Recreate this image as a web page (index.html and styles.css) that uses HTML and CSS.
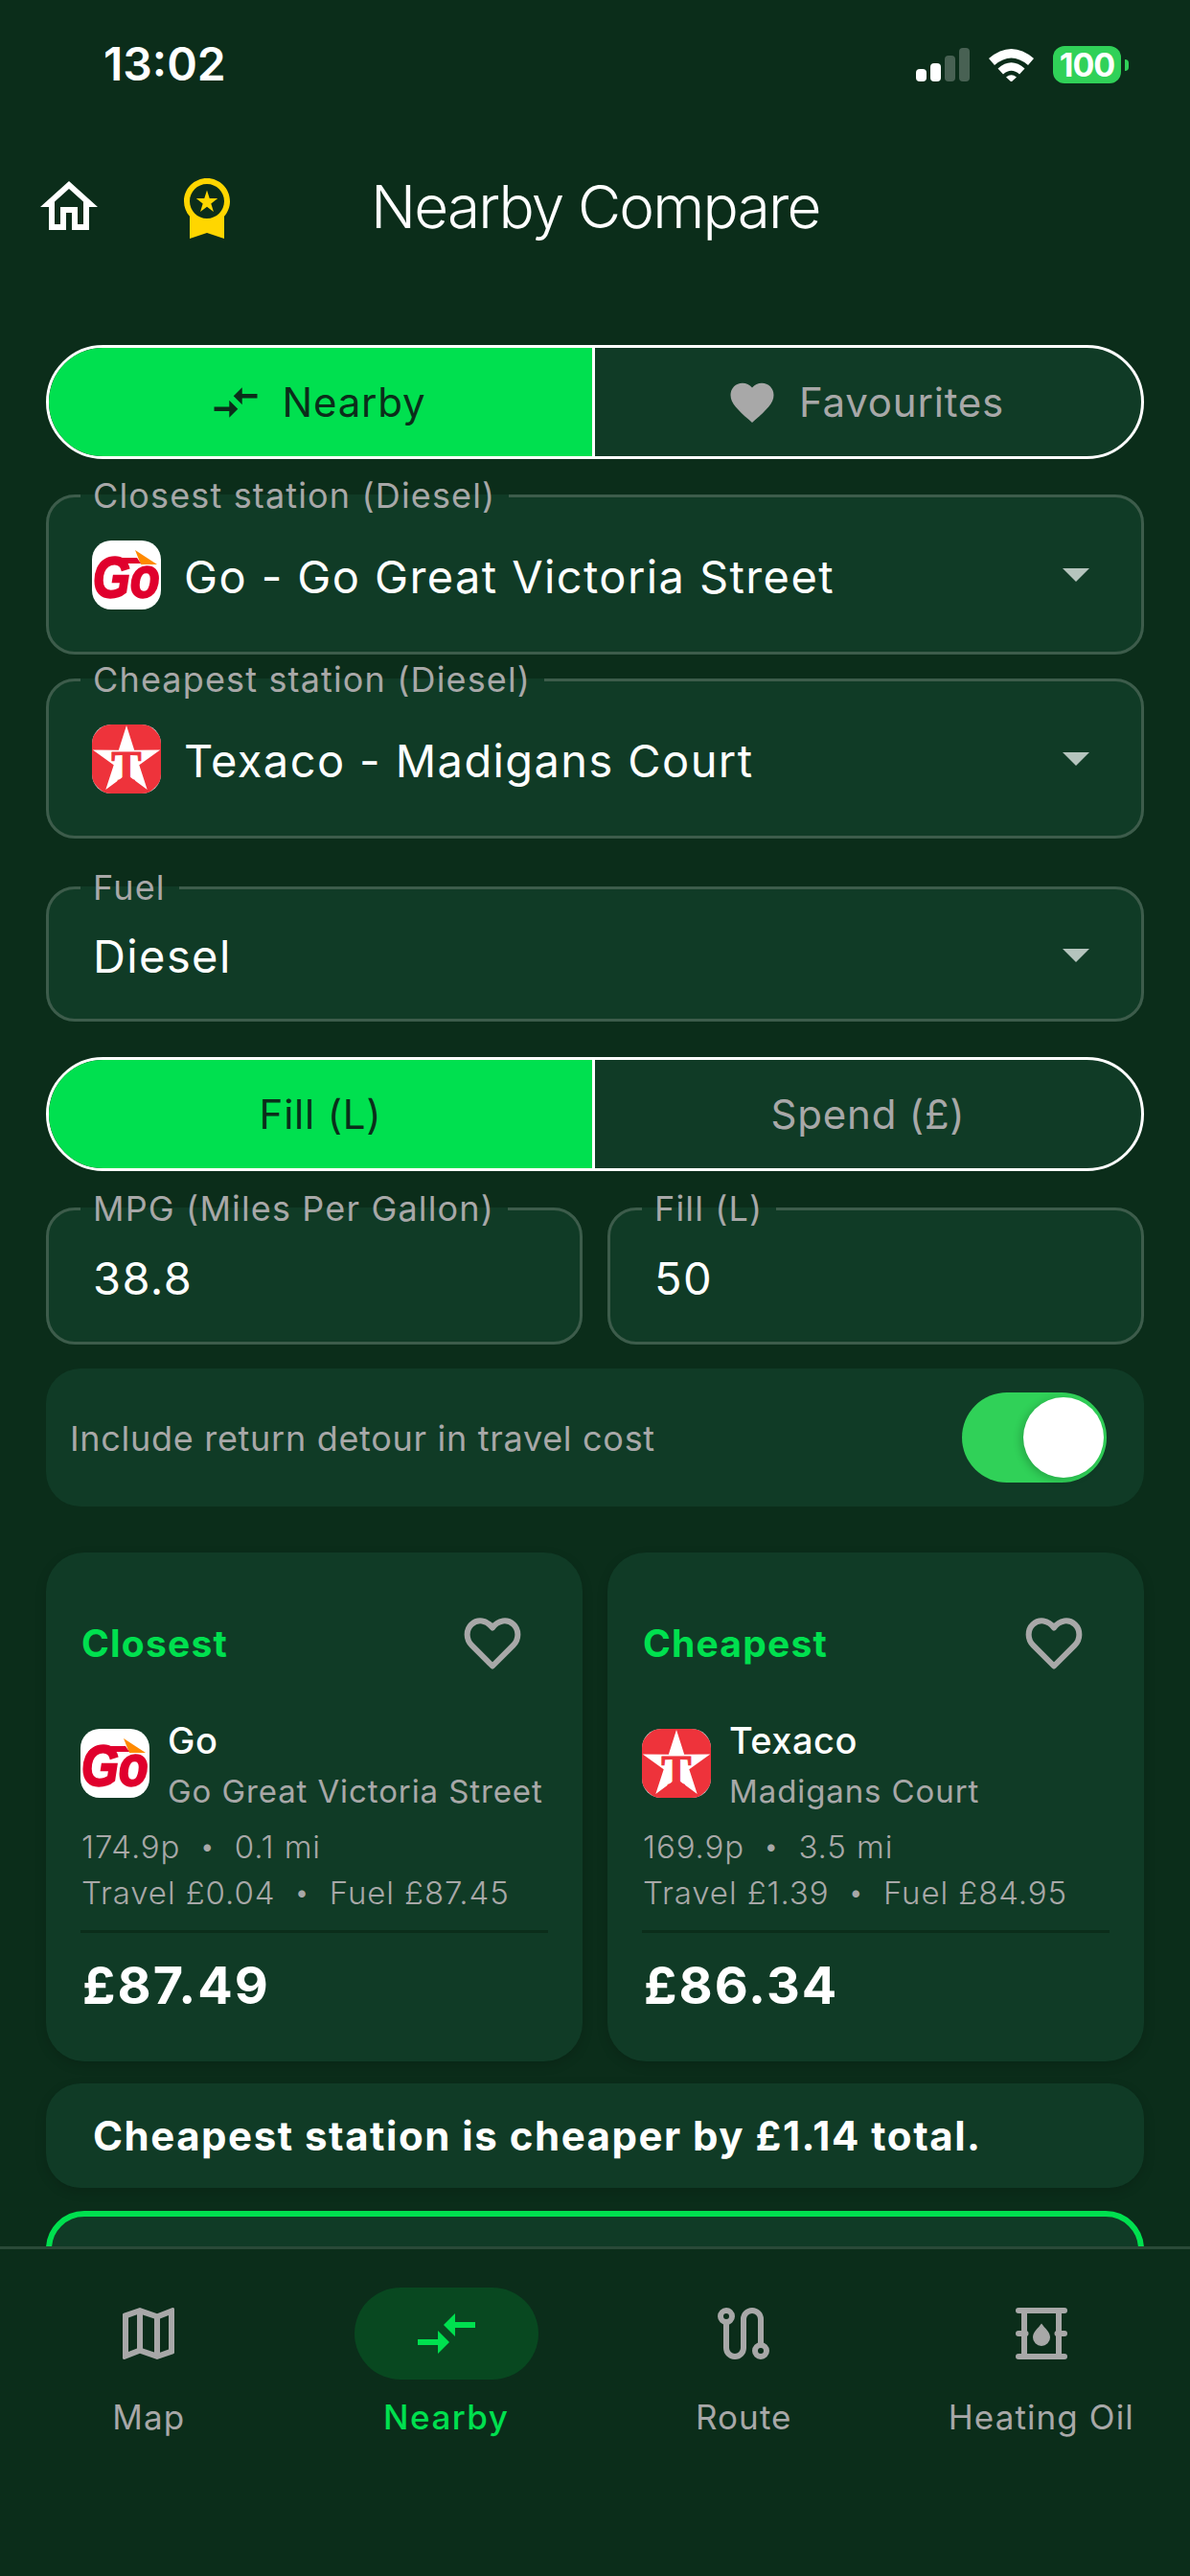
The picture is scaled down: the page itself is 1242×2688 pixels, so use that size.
FILE: index.html
```html
<!DOCTYPE html>
<html lang="en">
<head>
<meta charset="utf-8">
<title>Nearby Compare</title>
<link rel="stylesheet" href="styles.css">
</head>
<body>
<div class="app">
  <div class="status">
    <span class="time">13:02</span>
    <div class="status-icons">
      <div class="signal">
        <i class="bar b1"></i><i class="bar b2"></i><i class="bar b3 dim"></i><i class="bar b4 dim"></i>
      </div>
      <svg class="wifi" viewBox="0 0 47 35"><path d="M0 11Q23.500-9 47 11L41 18Q23.500 3 6 18Z"/><path d="M9.500 21.500Q23.500 9 37.500 21.500L32 27.500Q23.500 20 15 27.500Z"/><path d="M18 30.500Q23.500 26 29 30.500L23.500 35.500Z"/></svg>
      <div class="battery"><span class="batt-body">100</span><i class="batt-nub"></i></div>
    </div>
  </div>

  <header class="header">
    <svg class="ic72 white" viewBox="0 0 24 24"><path d="M12 5.690l5 4.500V18h-2v-6H9v6H7v-7.810l5-4.500M12 3L2 12h3v8h6v-6h2v6h6v-8h3L12 3z"/></svg>
    <svg class="ic72 gold" viewBox="0 0 24 24"><path d="M9.680 13.690 12 11.930l2.310 1.760-.88-2.850L15.750 9h-2.840L12 6.190 11.090 9H8.250l2.310 1.840-.88 2.850zM20 10c0-4.420-3.580-8-8-8s-8 3.580-8 8c0 2.030.76 3.870 2 5.280V23l6-2 6 2v-7.720c1.240-1.410 2-3.250 2-5.280zm-8-6c3.310 0 6 2.690 6 6s-2.690 6-6 6-6-2.690-6-6 2.690-6 6-6z"/></svg>
    <h1 class="title">Nearby Compare</h1>
  </header>

  <main class="scroll">
    <div class="segment">
      <div class="seg-item on with-icon">
        <svg class="ic54" viewBox="0 0 24 24"><path d="M9.010 14H2v2h7.010v3L13 15l-3.990-4v3zm5.980-1v-3H22V8h-7.010V5L11 9l3.990 4z"/></svg>
        <span>Nearby</span>
      </div>
      <div class="seg-item with-icon">
        <svg class="ic54" viewBox="0 0 24 24"><path d="M12 21.350l-1.450-1.320C5.400 15.360 2 12.280 2 8.500 2 5.420 4.420 3 7.500 3c1.740 0 3.410.81 4.500 2.090C13.090 3.810 14.760 3 16.500 3 19.580 3 22 5.420 22 8.500c0 3.780-3.400 6.860-8.550 11.540L12 21.350z"/></svg>
        <span>Favourites</span>
      </div>
    </div>

    <fieldset class="field sel-first">
      <legend class="field-label">Closest station (Diesel)</legend>
      <div class="field-row station-row">
        <svg class="logo" viewBox="0 0 72 72"><rect width="72" height="72" fill="#fff"/><polygon points="45,10 68,25 51,25" fill="#ff8a00"/><path d="M8 24Q12 18 24 18H47L51 24H8Z" fill="#e0002d"/><text class="go-text" transform="translate(1 59) scale(1 1.200)">Go</text></svg>
        <span class="field-value">Go - Go Great Victoria Street</span>
        <i class="caret"></i>
      </div>
    </fieldset>

    <fieldset class="field sel-second">
      <legend class="field-label">Cheapest station (Diesel)</legend>
      <div class="field-row station-row">
        <svg class="logo" viewBox="0 0 72 72"><rect width="72" height="72" fill="#cfcfcf"/><circle cx="36" cy="36" r="42" fill="#ee333b"/><polygon points="36,1 44.200,26.700 71.200,26.600 49.300,42.300 57.700,67.900 36,52 14.300,67.900 22.700,42.300 .8,26.600 27.800,26.700" fill="#fff"/><text class="tx-text" x="36" y="60" text-anchor="middle">T</text></svg>
        <span class="field-value">Texaco - Madigans Court</span>
        <i class="caret"></i>
      </div>
    </fieldset>

    <fieldset class="field fuel">
      <legend class="field-label">Fuel</legend>
      <div class="field-row plain-row">
        <span class="field-value">Diesel</span>
        <i class="caret"></i>
      </div>
    </fieldset>

    <div class="segment seg-fill">
      <div class="seg-item on"><span>Fill (L)</span></div>
      <div class="seg-item"><span>Spend (£)</span></div>
    </div>

    <div class="inputs">
      <fieldset class="field">
        <legend class="field-label">MPG (Miles Per Gallon)</legend>
        <div class="field-row input-row"><span class="field-value">38.8</span></div>
      </fieldset>
      <fieldset class="field">
        <legend class="field-label">Fill (L)</legend>
        <div class="field-row input-row"><span class="field-value">50</span></div>
      </fieldset>
    </div>

    <div class="toggle-row">
      <span class="toggle-label">Include return detour in travel cost</span>
      <div class="toggle"><i class="knob"></i></div>
    </div>

    <div class="cards">
      <section class="card">
        <div class="card-head">
          <span class="card-tag">Closest</span>
          <svg class="heart" viewBox="0 0 24 24"><path d="M12 20.500 4.800 13.300C2.700 11.200 2.700 7.900 4.700 6 6.800 4.100 10 4.400 12 7.200 14 4.400 17.200 4.100 19.300 6 21.300 7.900 21.300 11.200 19.200 13.300Z"/></svg>
        </div>
        <div class="card-station">
          <svg class="logo" viewBox="0 0 72 72"><rect width="72" height="72" fill="#fff"/><polygon points="45,10 68,25 51,25" fill="#ff8a00"/><path d="M8 24Q12 18 24 18H47L51 24H8Z" fill="#e0002d"/><text class="go-text" transform="translate(1 59) scale(1 1.200)">Go</text></svg>
          <div class="station-text">
            <div class="station-name">Go</div>
            <div class="station-addr">Go Great Victoria Street</div>
          </div>
        </div>
        <div class="meta"><span>174.9p</span><b class="dot">•</b><span>0.1 mi</span></div>
        <div class="meta"><span>Travel £0.04</span><b class="dot">•</b><span>Fuel £87.45</span></div>
        <div class="rule"></div>
        <div class="price">£87.49</div>
      </section>
      <section class="card">
        <div class="card-head">
          <span class="card-tag">Cheapest</span>
          <svg class="heart" viewBox="0 0 24 24"><path d="M12 20.500 4.800 13.300C2.700 11.200 2.700 7.900 4.700 6 6.800 4.100 10 4.400 12 7.200 14 4.400 17.200 4.100 19.300 6 21.300 7.900 21.300 11.200 19.200 13.300Z"/></svg>
        </div>
        <div class="card-station">
          <svg class="logo" viewBox="0 0 72 72"><rect width="72" height="72" fill="#cfcfcf"/><circle cx="36" cy="36" r="42" fill="#ee333b"/><polygon points="36,1 44.200,26.700 71.200,26.600 49.300,42.300 57.700,67.900 36,52 14.300,67.900 22.700,42.300 .8,26.600 27.800,26.700" fill="#fff"/><text class="tx-text" x="36" y="60" text-anchor="middle">T</text></svg>
          <div class="station-text">
            <div class="station-name">Texaco</div>
            <div class="station-addr">Madigans Court</div>
          </div>
        </div>
        <div class="meta"><span>169.9p</span><b class="dot">•</b><span>3.5 mi</span></div>
        <div class="meta"><span>Travel £1.39</span><b class="dot">•</b><span>Fuel £84.95</span></div>
        <div class="rule"></div>
        <div class="price">£86.34</div>
      </section>
    </div>

    <div class="banner">Cheapest station is cheaper by £1.14 total.</div>
    <div class="next-card"></div>
  </main>

  <nav class="nav">
    <div class="nav-item">
      <div class="nav-pill"><svg class="ic72" viewBox="0 0 24 24"><path d="M20.500 3l-.16.03L15 5.100 9 3 3.360 4.900c-.21.07-.36.25-.36.48V20.500c0 .28.22.5.5.5l.16-.03L9 18.900l6 2.100 5.640-1.900c.21-.07.36-.25.36-.48V3.500c0-.28-.22-.5-.5-.5zM10 5.470l4 1.400v11.660l-4-1.400V5.470zm-5 .99l3-1.010v11.700l-3 1.160V6.460zm14 11.080l-3 1.010V6.860l3-1.160v11.840z"/></svg></div>
      <span class="nav-label">Map</span>
    </div>
    <div class="nav-item active">
      <div class="nav-pill"><svg class="ic72" viewBox="0 0 24 24"><path d="M9.010 14H2v2h7.010v3L13 15l-3.990-4v3zm5.980-1v-3H22V8h-7.010V5L11 9l3.990 4z"/></svg></div>
      <span class="nav-label">Nearby</span>
    </div>
    <div class="nav-item">
      <div class="nav-pill"><svg class="ic72 line" viewBox="0 0 24 24"><circle cx="6" cy="6" r="2"/><circle cx="18" cy="18" r="2"/><path d="M6 8V17a3 3 0 0 0 6 0V7a3 3 0 0 1 6 0V16"/></svg></div>
      <span class="nav-label">Route</span>
    </div>
    <div class="nav-item">
      <div class="nav-pill"><svg class="ic72" viewBox="0 0 24 24"><rect x="3" y="3" width="18" height="2" rx="1"/><rect x="3" y="19" width="18" height="2" rx="1"/><rect x="5" y="4" width="2" height="16"/><rect x="17" y="4" width="2" height="16"/><rect x="3" y="11" width="4.500" height="2" rx="1"/><rect x="16.500" y="11" width="4.500" height="2" rx="1"/><path d="M12 8.500C13.200 10.200 15 11.500 15 13.300A3 3 0 0 1 9 13.300C9 11.500 10.800 10.200 12 8.500Z"/></svg></div>
      <span class="nav-label">Heating Oil</span>
    </div>
  </nav>
</div>
</body>
</html>
```
FILE: styles.css
```css
* { box-sizing: border-box; }
html, body { margin: 0; padding: 0; }
body {
  width: 1242px;
  height: 2688px;
  background: #0b2d1a;
  font-family: Inter, "Noto Sans", sans-serif;
  color: #fff;
  overflow: hidden;
}
.app {
  width: 1242px;
  height: 2688px;
  display: flex;
  flex-direction: column;
}

/* status bar */
.status {
  height: 180px;
  padding: 42px 64px 0 108px;
  display: flex;
  justify-content: space-between;
  align-items: flex-start;
  flex: none;
}
.time { font-size: 48px; font-weight: 600; line-height: 50px; }
.status-icons { display: flex; align-items: flex-start; margin-top: 6px; }
.signal { display: flex; align-items: flex-end; gap: 4px; height: 35px; margin-top: 2px; margin-right: 20px; }
.bar { display: block; width: 11px; background: #fff; border-radius: 4px; }
.b1 { height: 13px; }
.b2 { height: 19px; }
.b3 { height: 27px; }
.b4 { height: 35px; }
.dim { opacity: .25; }
.wifi { width: 47px; height: 35px; fill: #fff; margin-top: 2px; margin-right: 20px; }
.battery { display: flex; align-items: center; gap: 4px; }
.batt-body {
  width: 71px; height: 39px;
  background: #30d158;
  border-radius: 12px;
  font-size: 34px; font-weight: 700; line-height: 39px;
  letter-spacing: -1px;
  text-align: center;
}
.batt-nub { display: block; width: 4px; height: 12px; background: #30d158; border-radius: 0 4px 4px 0; }

/* header */
.header {
  flex: none;
  height: 72px;
  padding-left: 36px;
  display: flex;
  align-items: center;
  gap: 72px;
}
.ic72 { width: 72px; height: 72px; fill: currentColor; display: block; flex: none; }
.ic54 { width: 54px; height: 54px; fill: currentColor; display: block; flex: none; }
.white { color: #fff; }
.gold { color: #ffd600; }
.title {
  margin: 0 0 0 63px;
  font-size: 62px;
  font-weight: 300;
  letter-spacing: -1.8px;
  line-height: 72px;
}

/* scroll area */
.scroll {
  flex: 1;
  min-height: 0;
  overflow: hidden;
  padding: 108px 48px 0;
}

/* segmented buttons */
.segment {
  height: 119px;
  display: grid;
  grid-template-columns: 1fr 1fr;
  border: 3px solid #fff;
  border-radius: 60px;
  overflow: hidden;
  background: #103b26;
}
.seg-item {
  display: flex;
  align-items: center;
  justify-content: center;
  gap: 22px;
  font-size: 42px;
  letter-spacing: .8px;
  color: #a8a8a8;
}
.seg-item.on {
  background: #00e04f;
  color: #0b2d1a;
  border-right: 3px solid #fff;
}
.with-icon { padding-right: 6px; }
.seg-fill { margin-top: 37px; }

/* outlined fields */
.field {
  margin: 0;
  padding: 0;
  min-width: 0;
  border: 3px solid #3d5c4b;
  border-radius: 30px;
  background: #103b26;
}
.field-label {
  margin-left: 33px;
  padding: 0 14px 0 13px;
  font-size: 36px;
  line-height: 41px;
  letter-spacing: 1.15px;
  color: #a8a8a8;
}
.sel-first { margin-top: 18px; }
.sel-second { margin-top: 6px; }
.fuel { margin-top: 31px; }
.field-row { display: flex; align-items: center; padding-left: 45px; padding-right: 54px; }
.station-row { padding-top: 26px; padding-bottom: 44px; gap: 24px; }
.plain-row { padding-top: 21px; padding-bottom: 38px; padding-left: 46px; }
.input-row { padding-top: 22px; padding-bottom: 39px; padding-left: 46px; }
.field-value { flex: 1; padding-top: 3px; font-size: 47px; line-height: 54px; letter-spacing: 1.4px; }
.caret {
  display: block;
  width: 0; height: 0;
  border-left: 14.500px solid transparent;
  border-right: 14.500px solid transparent;
  border-top: 14px solid #b5c4bd;
}

/* logos */
.logo { width: 72px; height: 72px; border-radius: 20px; display: block; flex: none; }
.go-text {
  font-family: "Liberation Sans", sans-serif;
  font-weight: 700;
  font-style: italic;
  font-size: 50px;
  fill: #e0002d;
  stroke: #e0002d;
  stroke-width: 2px;
}
.tx-text {
  font-family: "Liberation Serif", serif;
  font-weight: 700;
  font-size: 47px;
  fill: #ee333b;
  stroke: #ee333b;
  stroke-width: 1px;
}

/* inputs */
.inputs {
  margin-top: 19px;
  display: grid;
  grid-template-columns: repeat(2, minmax(0, 1fr));
  gap: 26px;
}

/* toggle */
.toggle-row {
  margin-top: 25px;
  height: 144px;
  border-radius: 36px;
  background: #103b26;
  padding: 0 39px 0 25px;
  display: flex;
  align-items: center;
  justify-content: space-between;
}
.toggle-label { font-size: 36px; letter-spacing: .7px; color: #a8a8a8; padding-top: 2px; }
.toggle {
  width: 151px; height: 94px;
  border-radius: 47px;
  background: #30d158;
  padding: 5px 3px;
  display: flex;
  justify-content: flex-end;
}
.knob { display: block; width: 84px; height: 84px; border-radius: 50%; background: #fff; box-shadow: -3px 2px 8px rgba(0,0,0,.2); }

/* result cards */
.cards {
  margin-top: 48px;
  display: grid;
  grid-template-columns: repeat(2, minmax(0, 1fr));
  gap: 26px;
}
.card {
  height: 531px;
  border-radius: 40px;
  background: #103b26;
  padding: 71px 36px 0;
  box-shadow: 0 4px 12px rgba(0,0,0,.15);
}
.card-head { display: flex; align-items: center; justify-content: space-between; height: 44px; padding-left: 1px; }
.card-tag { margin-top: 2px; font-size: 39px; font-weight: 700; letter-spacing: 1.2px; color: #00e04f; }
.heart {
  width: 72px; height: 72px; flex: none;
  margin-right: 22px;
  fill: none;
  stroke: #a8a8a8;
  stroke-width: 2px;
  stroke-linejoin: round;
}
.card-station { display: flex; gap: 19px; margin-top: 69px; align-items: flex-start; }
.station-text { margin-top: -11px; }
.station-name { font-size: 38px; font-weight: 500; line-height: 46px; letter-spacing: .5px; }
.station-addr { font-size: 33px; line-height: 40px; letter-spacing: .9px; margin-top: 10px; color: #a8a8a8; white-space: nowrap; }
.meta {
  font-size: 33px;
  font-weight: 300;
  line-height: 48px;
  letter-spacing: .9px;
  color: #a8a8a8;
  display: flex;
  padding-left: 1px;
}
.card-station + .meta { margin-top: 14px; }
.dot { font-weight: 400; font-size: 24px; margin: 0 21px; }
.rule { height: 3px; margin-top: 15px; background: #0b2d1a; }
.price { font-size: 54px; font-weight: 700; letter-spacing: 2px; line-height: 64px; margin-top: 23px; padding-left: 2px; }

/* banner and following card */
.banner {
  margin-top: 23px;
  height: 109px;
  border-radius: 36px;
  background: #103b26;
  padding-left: 49px;
  display: flex;
  align-items: center;
  font-size: 42px;
  font-weight: 700;
  letter-spacing: 1.52px;
  box-shadow: 0 4px 12px rgba(0,0,0,.15);
}
.next-card {
  margin-top: 24px;
  height: 300px;
  border: 6px solid #00e04f;
  border-radius: 40px;
  background: #103b26;
}

/* bottom nav */
.nav {
  flex: none;
  height: 344px;
  border-top: 3px solid #2a4a38;
  background: #0b2d1a;
  display: grid;
  grid-template-columns: repeat(4, 1fr);
  padding-top: 40px;
}
.nav-item { display: flex; flex-direction: column; align-items: center; color: #a8a8a8; }
.nav-pill {
  width: 192px; height: 96px;
  border-radius: 48px;
  display: flex;
  align-items: center;
  justify-content: center;
}
.nav-label { font-size: 35px; letter-spacing: 1.1px; line-height: 44px; margin-top: 17px; white-space: nowrap; }
.active { color: #00e04f; }
.active .nav-pill { background: #084820; }
.active .nav-label { font-weight: 500; letter-spacing: 1.5px; }
.line { fill: none; stroke: currentColor; stroke-width: 2px; }
```
